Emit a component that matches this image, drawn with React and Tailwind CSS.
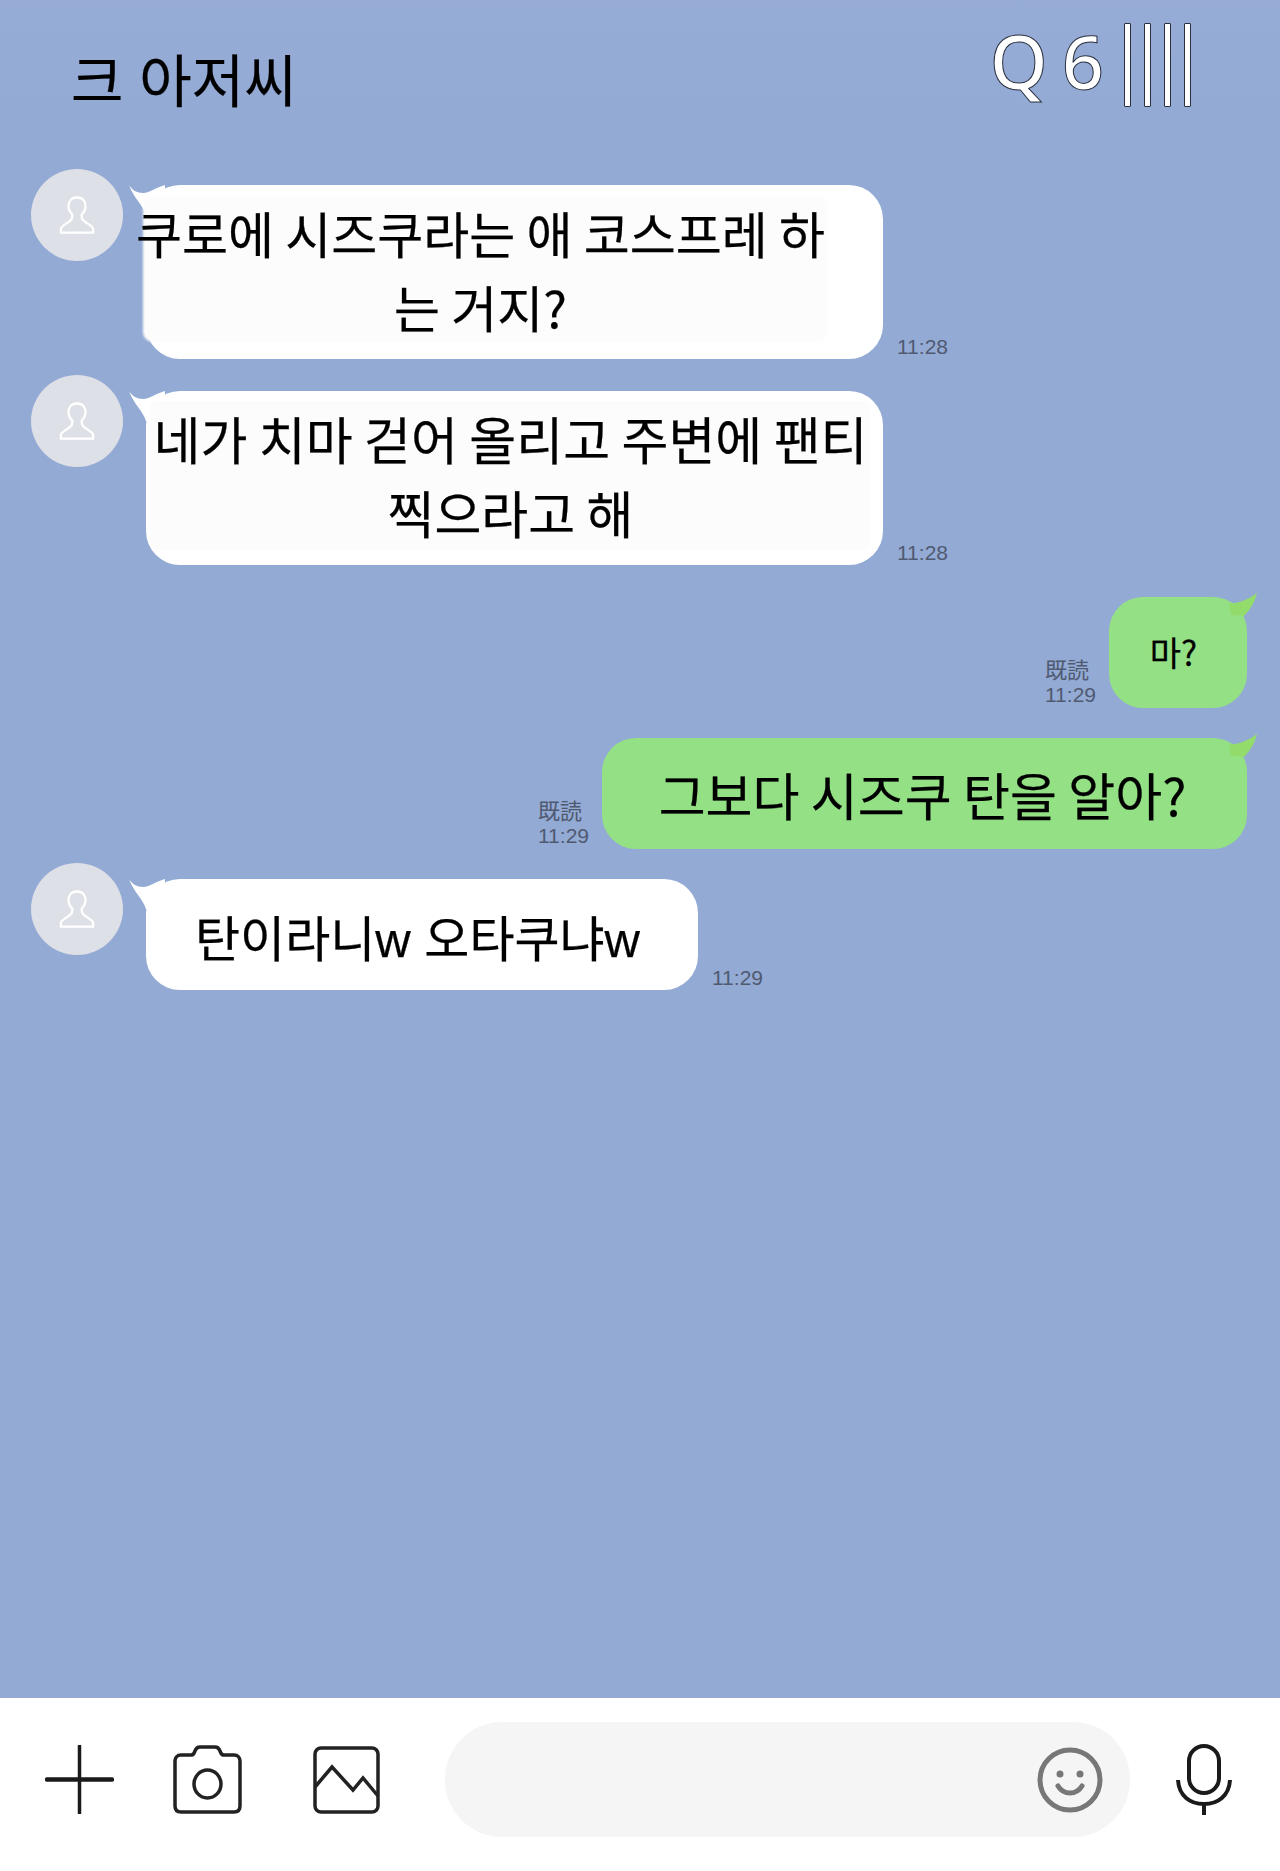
import React from 'react';

const cjk = '"Noto Sans CJK KR", "Noto Sans", sans-serif';
const latinFirst = '"Liberation Sans", "Noto Sans CJK KR", "Noto Sans", sans-serif';

// message text runs a bit heavier than the regular weight
const heavy = '[-webkit-text-stroke:0.25px_#000000]';

// default profile picture: grey circle with an outlined bust
const Avatar = () => (
  <div className="w-[92px] h-[92px] shrink-0 rounded-full bg-[#dde0e6] flex items-center justify-center">
    <svg width="36" height="39" viewBox="0 0 38 40" fill="none" stroke="#ffffff" strokeWidth="2.4" className="mt-[1px]">
      <path d="M19 1c-6 0-9 4-9 9 0 4 2 7 4 9v3c0 2-2 3-4 5-3 2-7 4-8 7v4h34v-4c-1-3-5-5-8-7-2-2-4-3-4-5v-3c2-2 4-5 4-9 0-5-3-9-9-9z" />
    </svg>
  </div>
);

const LeftTail = () => (
  <svg width="36" height="30" viewBox="0 0 36 30" className="absolute left-[-17px] top-0">
    <path d="M0 0C3 5 8 8 14 8C20 8 26 3 36 0V30H17C14 20 4 12 0 0z" fill="#ffffff" />
  </svg>
);

const RightTail = () => (
  <svg width="28" height="24" viewBox="0 0 28 24" className="absolute right-[-10px] top-[-4px]">
    <path d="M28 0C26 8 22 16 15 23L2 22L0 10C10 11 20 6 28 0z" fill="#93dc6c" />
  </svg>
);

const Time = ({ children, className = '' }) => (
  <div className={`text-[21px] leading-[24px] font-normal text-[#4f5a72] ${className}`} style={{ fontFamily: '"Liberation Sans", sans-serif' }}>
    {children}
  </div>
);

// "read" marker and time beside the sent bubbles
const ReadMark = () => (
  <div className="flex flex-col items-start mr-[13px] mb-[1px]">
    <span className="text-[22px] leading-[30px] font-normal text-[#4f5a72]" style={{ fontFamily: '"Noto Sans CJK JP", sans-serif' }}>既読</span>
    <Time>11:29</Time>
  </div>
);

const Incoming = ({ time, width, className = '', children }) => (
  <div className={`flex items-start pl-[31px] ${className}`}>
    <Avatar />
    <div className="flex items-end mt-[16px] ml-[23px]">
      <div className={`relative bg-white rounded-[34px] ${width}`}>
        <LeftTail />
        {children}
      </div>
      <Time className="ml-[14px]">{time}</Time>
    </div>
  </div>
);

const Outgoing = ({ width, className = '', children }) => (
  <div className={`flex items-end justify-end pr-[33px] ${className}`}>
    <ReadMark />
    <div className={`relative bg-[#94e085] rounded-[34px] h-[111px] flex items-center justify-center ${width}`}>
      <RightTail />
      {children}
    </div>
  </div>
);

export default function App() {
  return (
    <div className="w-[1280px] h-[1871px] flex flex-col bg-[#93aad4] overflow-hidden" style={{ fontFamily: cjk }}>
      <header className="h-[130px] flex items-start bg-linear-to-b from-[#96acd6] to-[#93aad4]">
        <h1 className={`ml-[71px] mt-[44px] text-[57px] leading-[76px] text-black font-normal ${heavy}`} style={{ fontFamily: latinFirst }}>크 아저씨</h1>
        <div className="ml-auto mr-[89px] mt-[19px] flex items-start" style={{ fontFamily: '"Noto Sans", sans-serif' }}>
          <span className="text-[74px] leading-[84px] text-white font-medium [-webkit-text-stroke:1px_#2a3040]">Q</span>
          <span className="ml-[14px] text-[74px] leading-[84px] text-white font-medium [-webkit-text-stroke:1px_#2a3040]">6</span>
          <div className="ml-[20px] mt-[4px] flex gap-[13px]">
            <div className="w-[7px] h-[84px] bg-white border border-[#2a3040] rounded-[1px]" />
            <div className="w-[7px] h-[84px] bg-white border border-[#2a3040] rounded-[1px]" />
            <div className="w-[7px] h-[84px] bg-white border border-[#2a3040] rounded-[1px]" />
            <div className="w-[7px] h-[84px] bg-white border border-[#2a3040] rounded-[1px]" />
          </div>
        </div>
      </header>

      <main className="flex-1 pt-[39px] text-black text-[50px] leading-[74px]">
        <Incoming time="11:28" width="w-[737px] h-[174px]">
          <div className="absolute left-[-3px] top-[11px] w-[685px] h-[146px] bg-[#fcfcfc] rounded-[10px] blur-[1px]" />
          <div className={`absolute left-[-9px] top-[10px] w-[687px] flex flex-col items-center whitespace-nowrap ${heavy}`}>
            <span>쿠로에 시즈쿠라는 애 코스프레 하</span>
            <span>는 거지?</span>
          </div>
        </Incoming>

        <Incoming time="11:28" width="w-[737px] h-[174px]" className="mt-[16px]">
          <div className="absolute left-[4px] top-[10px] w-[720px] h-[149px] bg-[#fcfcfc] rounded-[6px]" />
          <div className={`absolute left-[9px] top-[10px] w-[711px] flex flex-col items-center whitespace-nowrap text-[51px] ${heavy}`}>
            <span>네가 치마 걷어 올리고 주변에 팬티</span>
            <span>찍으라고 해</span>
          </div>
        </Incoming>

        <Outgoing width="w-[138px]" className="mt-[32px]">
          <span className={`text-[34px] leading-[46px] -mt-[2px] -ml-[9px] ${heavy}`}>마?</span>
        </Outgoing>

        <Outgoing width="w-[645px]" className="mt-[30px]">
          <span className={`-ml-[4px] text-[51px] ${heavy}`}>그보다 시즈쿠 탄을 알아?</span>
        </Outgoing>

        <Incoming time="11:29" width="w-[552px] h-[111px] pt-[10px] flex items-center justify-center" className="mt-[14px]">
          <span className={`-ml-[9px] text-[49px] ${heavy}`} style={{ fontFamily: latinFirst }}>탄이라니w 오타쿠냐w</span>
        </Incoming>
      </main>

      <footer className="h-[173px] bg-white pt-[24px] pl-[45px]">
        <div className="flex items-center h-[115px]">
          <svg width="69" height="69" viewBox="0 0 69 69" fill="none" stroke="#1a1a1a" strokeLinecap="round" className="shrink-0">
            <path d="M2 34.5h65" strokeWidth="4.5" />
            <path d="M34.5 1v67" strokeWidth="3.5" />
          </svg>
          <svg width="69" height="69" viewBox="0 0 69 69" fill="none" stroke="#222222" strokeWidth="3.5" className="shrink-0 ml-[59px]">
            <path d="M8 10h10c3 0 3-2 4-4 1-3 3-4 5-4h15c2 0 4 1 5 4 1 2 1 4 4 4h10c4 0 6 3 6 6v45c0 4-2 6-6 6H8c-4 0-6-2-6-6V16c0-3 2-6 6-6z" />
            <ellipse cx="34.5" cy="39" rx="13.5" ry="14" />
          </svg>
          <svg width="67" height="68" viewBox="0 0 67 68" fill="none" stroke="#222222" strokeWidth="3.5" strokeLinejoin="miter" className="shrink-0 ml-[71px]">
            <rect x="2" y="2" width="63" height="64" rx="6" />
            <path d="M2 41l17-20 21 23 10-12 15 18" />
          </svg>
          <div className="ml-[65px] w-[685px] h-[115px] shrink-0 rounded-[57px] bg-[#f5f5f5] flex items-center justify-end pr-[27px]">
            <svg width="66" height="66" viewBox="0 0 66 66" fill="none" stroke="#777777" strokeWidth="5" strokeLinecap="round">
              <circle cx="33" cy="33" r="30" />
              <circle cx="23" cy="27" r="3.5" fill="#777777" stroke="none" />
              <circle cx="43" cy="27" r="3.5" fill="#777777" stroke="none" />
              <path d="M21 39c3 5 7 7 12 7s9-2 12-7" />
            </svg>
          </div>
          <svg width="56" height="71" viewBox="0 0 56 71" fill="none" stroke="#1a1a1a" strokeWidth="4" className="shrink-0 ml-[46px]">
            <rect x="13" y="2" width="30" height="47" rx="15" />
            <path d="M2 36c1 16 12 24 26 24s25-8 26-24" />
            <path d="M28 60v11" />
          </svg>
        </div>
      </footer>
    </div>
  );
}
